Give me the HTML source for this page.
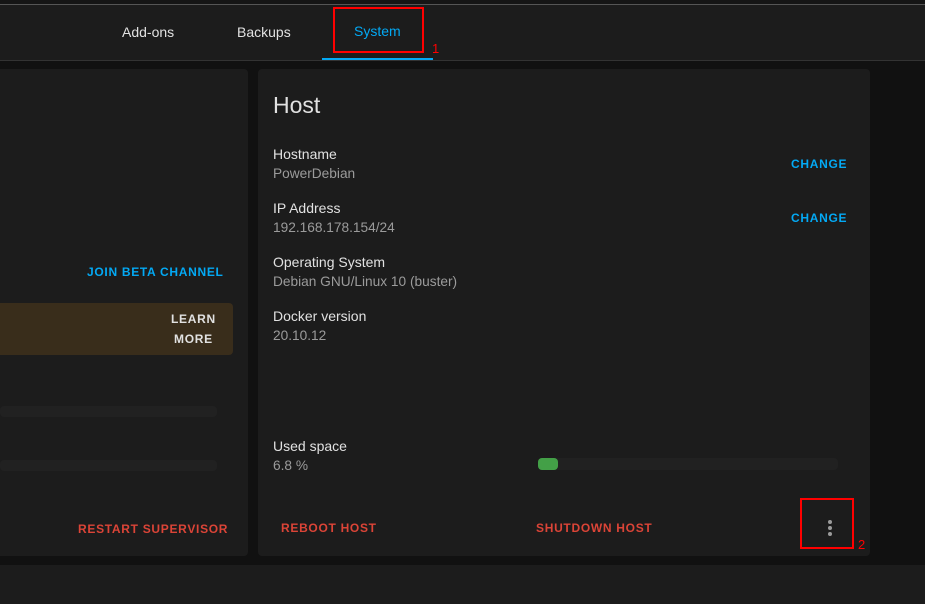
<!DOCTYPE html>
<html><head><style>
*{margin:0;padding:0;box-sizing:border-box}
body{width:925px;height:604px;background:#111;font-family:"Liberation Sans",sans-serif;position:relative;overflow:hidden;color:#e1e1e1}
.a{position:absolute}
.btn{font-size:12px;font-weight:bold;letter-spacing:0.7px}
.lbl{font-size:14px;color:#e1e1e1}
.val{font-size:13.7px;color:#9b9b9b}
</style></head><body>
<div class="a" style="left:0;top:0;width:925px;height:4px;background:#151515"></div>
<div class="a" style="left:0;top:4px;width:925px;height:1px;background:#555"></div>
<div class="a" style="left:0;top:5px;width:925px;height:55px;background:#1c1c1c"></div>
<div class="a" style="left:0;top:60px;width:925px;height:1px;background:#333"></div>
<div class="a" style="left:122px;top:24px;font-size:14px">Add-ons</div>
<div class="a" style="left:237px;top:24px;font-size:14px">Backups</div>
<div class="a" style="left:354px;top:23px;font-size:14px;color:#03a9f4">System</div>
<div class="a" style="left:322px;top:58px;width:111px;height:2px;background:#03a9f4"></div>
<div class="a" style="left:333px;top:7px;width:91px;height:46px;border:2px solid #f00"></div>
<div class="a" style="left:432px;top:41px;font-size:13px;color:#f00">1</div>

<div class="a" style="left:-10px;top:69px;width:258px;height:487px;background:#1c1c1c;border-radius:4px"></div>
<div class="a btn" style="left:87px;top:265px;color:#03a9f4">JOIN BETA CHANNEL</div>
<div class="a" style="left:0;top:303px;width:233px;height:52px;background:#392d1b;border-radius:0 4px 4px 0"></div>
<div class="a btn" style="left:171px;top:312px;color:#e1e1e1">LEARN</div>
<div class="a btn" style="left:174px;top:332px;color:#e1e1e1">MORE</div>
<div class="a" style="left:0;top:406px;width:217px;height:11px;background:#212121;border-radius:4px"></div>
<div class="a" style="left:0;top:460px;width:217px;height:11px;background:#212121;border-radius:4px"></div>
<div class="a btn" style="left:78px;top:522px;color:#db4437">RESTART SUPERVISOR</div>

<div class="a" style="left:258px;top:69px;width:612px;height:487px;background:#1c1c1c;border-radius:4px"></div>
<div class="a" style="left:273px;top:92px;font-size:23px;color:#e1e1e1">Host</div>
<div class="a lbl" style="left:273px;top:146px">Hostname</div>
<div class="a val" style="left:273px;top:166px">PowerDebian</div>
<div class="a btn" style="left:791px;top:157px;color:#03a9f4">CHANGE</div>
<div class="a lbl" style="left:273px;top:200px">IP Address</div>
<div class="a val" style="left:273px;top:220px">192.168.178.154/24</div>
<div class="a btn" style="left:791px;top:211px;color:#03a9f4">CHANGE</div>
<div class="a lbl" style="left:273px;top:254px">Operating System</div>
<div class="a val" style="left:273px;top:274px">Debian GNU/Linux 10 (buster)</div>
<div class="a lbl" style="left:273px;top:308px">Docker version</div>
<div class="a val" style="left:273px;top:328px">20.10.12</div>
<div class="a lbl" style="left:273px;top:438px">Used space</div>
<div class="a val" style="left:273px;top:458px">6.8 %</div>
<div class="a" style="left:538px;top:458px;width:300px;height:12px;background:#212121;border-radius:4px"></div>
<div class="a" style="left:538px;top:458px;width:20px;height:12px;background:#43a047;border-radius:4px"></div>
<div class="a btn" style="left:281px;top:521px;color:#db4437">REBOOT HOST</div>
<div class="a btn" style="left:536px;top:521px;color:#db4437">SHUTDOWN HOST</div>
<div class="a" style="left:828px;top:520px;width:4px;height:4px;border-radius:50%;background:#9b9b9b"></div>
<div class="a" style="left:828px;top:526px;width:4px;height:4px;border-radius:50%;background:#9b9b9b"></div>
<div class="a" style="left:828px;top:532px;width:4px;height:4px;border-radius:50%;background:#9b9b9b"></div>
<div class="a" style="left:800px;top:498px;width:54px;height:51px;border:2px solid #f00"></div>
<div class="a" style="left:858px;top:537px;font-size:13px;color:#f00">2</div>

<div class="a" style="left:0;top:565px;width:925px;height:39px;background:#1c1c1c"></div>
</body></html>
